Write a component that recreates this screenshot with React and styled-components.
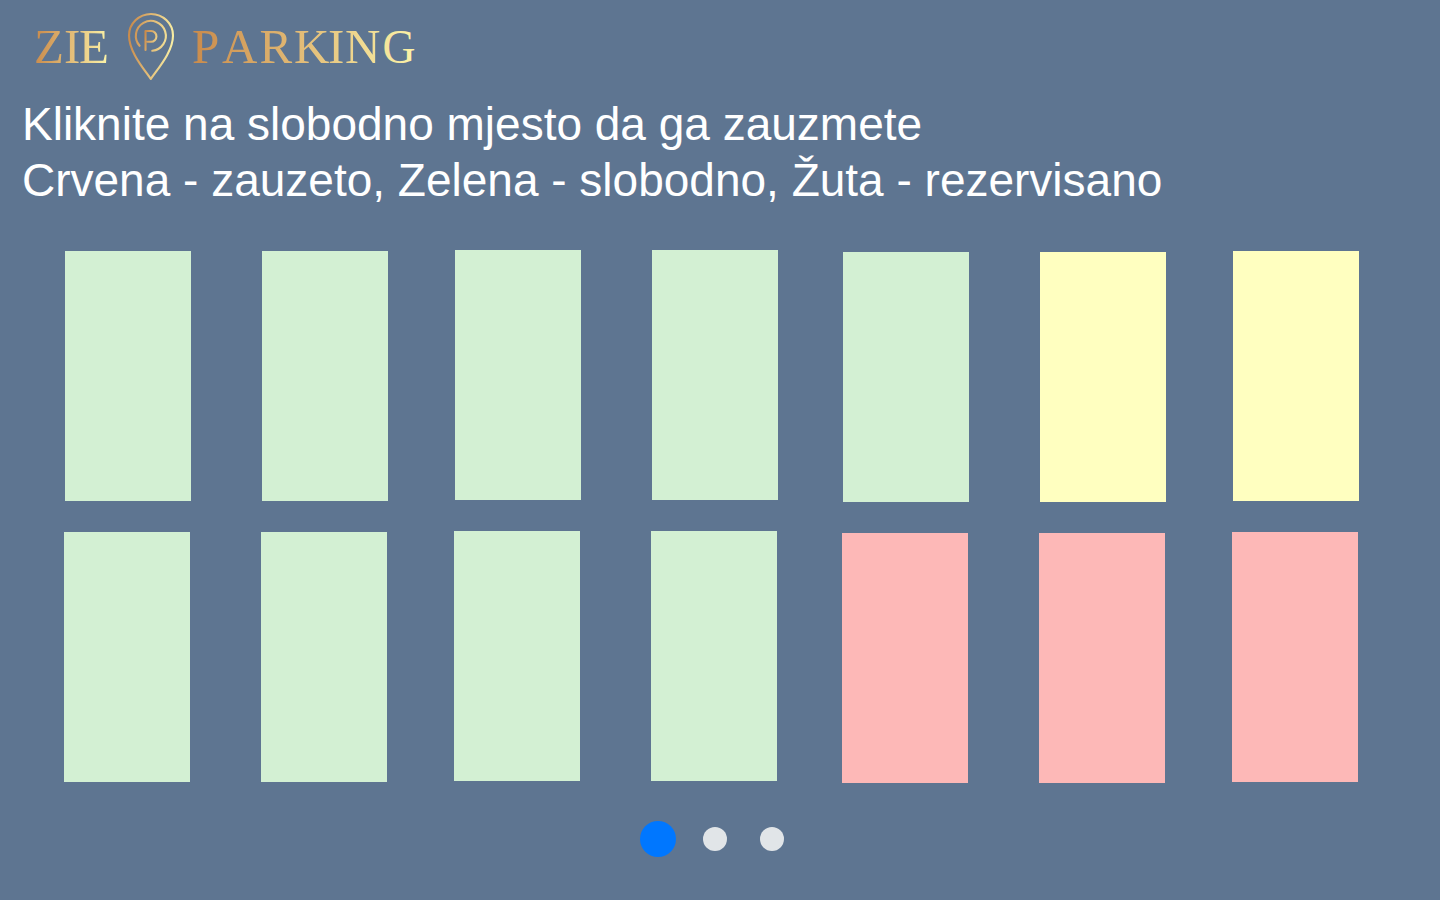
import React from "react";
import styled, { createGlobalStyle } from "styled-components";

const GlobalStyle = createGlobalStyle`
  * { box-sizing: border-box; }
  body { margin: 0; background: #5e7591; overflow: hidden; }
`;

const Page = styled.main`
  height: 900px;
  display: flex;
  flex-direction: column;
  background: #5e7591;
  font-family: "Liberation Sans", Arial, sans-serif;
`;

const Header = styled.header`
  height: 96px;
  flex: none;
`;

const Logo = styled.svg`
  display: block;
  font-family: "Liberation Serif", serif;
  font-size: 49px;
`;

const Instructions = styled.p`
  margin: 0;
  padding-left: 22px;
  height: 154px;
  flex: none;
  color: #fff;
  font-size: 46px;
  line-height: 56px;
  white-space: nowrap;
`;

const SlotRow = styled.div`
  display: flex;
  flex: none;
  height: 281px;
  padding-left: ${(p) => p.$start}px;
`;

const slotColors = { free: "#d3f0d3", reserved: "#ffffc0", taken: "#fdb8b7" };

const Slot = styled.button`
  flex: none;
  width: 126px;
  height: 250px;
  padding: 0;
  border: 0;
  margin: ${(p) => p.$top}px 0 0 ${(p) => p.$gap}px;
  background: ${(p) => slotColors[p.$status]};
  cursor: pointer;
`;

const Pager = styled.nav`
  display: flex;
  align-items: center;
  height: 36px;
  margin-top: 9px;
  padding-left: 640px;
`;

const Dot = styled.button`
  flex: none;
  width: ${(p) => (p.$active ? 36 : 24)}px;
  height: ${(p) => (p.$active ? 36 : 24)}px;
  margin-right: ${(p) => (p.$active ? 27 : 33)}px;
  padding: 0;
  border: 0;
  border-radius: 50%;
  background: ${(p) => (p.$active ? "#0077ff" : "#e1e5e8")};
`;

const spacing = [
  { gap: 0, top: 1 },
  { gap: 71, top: 1 },
  { gap: 67, top: 0 },
  { gap: 71, top: 0 },
  { gap: 65, top: 2 },
  { gap: 71, top: 2 },
  { gap: 67, top: 1 },
];

const rows = [
  { start: 65, slots: ["free", "free", "free", "free", "free", "reserved", "reserved"] },
  { start: 64, slots: ["free", "free", "free", "free", "taken", "taken", "taken"] },
];

function Gold({ id, x1, x2 }) {
  return (
    <linearGradient id={id} gradientUnits="userSpaceOnUse" x1={x1} y1="45" x2={x2} y2="50">
      <stop offset="0" stopColor="#c98b4c" />
      <stop offset="0.5" stopColor="#e3bd78" />
      <stop offset="1" stopColor="#fbf3a8" />
    </linearGradient>
  );
}

function BrandLogo() {
  return (
    <Logo width="440" height="90" viewBox="0 0 440 90" role="img" aria-label="ZIE Parking">
      <defs>
        <Gold id="goldLeft" x1="35" x2="108" />
        <Gold id="goldPin" x1="128" x2="174" />
        <Gold id="goldMark" x1="142" x2="160" />
        <Gold id="goldRight" x1="193" x2="415" />
      </defs>
      <text x="34 64 79" y="63" fill="url(#goldLeft)">ZIE</text>
      <g fill="none" stroke="url(#goldPin)" strokeWidth="2.1" strokeLinejoin="round" strokeLinecap="round">
        <path d="M150.8 79C144 69 129 52 129 35.5A22 21.5 0 0 1 173 35.5C173 52 157.5 69 150.8 79Z" />
        <path d="M139.6 45.8A15 15 0 1 1 152.3 50.8" />
        <path stroke="url(#goldMark)" d="M145.5 50V31H151A5.4 5.4 0 0 1 151 41.8H147.500" />
      </g>
      <text x="192 222 259.5 294 328 345" y="63" fill="url(#goldRight)">PARKIN</text>
      <text x="382.5" y="63" textLength="33" lengthAdjust="spacingAndGlyphs" fill="url(#goldRight)">G</text>
    </Logo>
  );
}

export default function App() {
  return (
    <Page>
      <GlobalStyle />
      <Header>
        <BrandLogo />
      </Header>
      <Instructions>
        Kliknite na slobodno mjesto da ga zauzmete
        <br />
        Crvena - zauzeto, Zelena - slobodno, Žuta - rezervisano
      </Instructions>
      {rows.map((row) => (
        <SlotRow key={row.start} $start={row.start}>
          {row.slots.map((status, i) => (
            <Slot key={i} $status={status} $gap={spacing[i].gap} $top={spacing[i].top} />
          ))}
        </SlotRow>
      ))}
      <Pager>
        <Dot $active />
        <Dot />
        <Dot />
      </Pager>
    </Page>
  );
}
